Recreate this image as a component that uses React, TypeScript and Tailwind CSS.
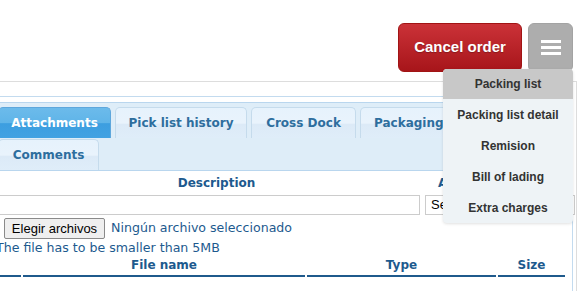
import React from "react";

const dv = { fontFamily: '"DejaVu Sans", Verdana, sans-serif' };
const ar = { fontFamily: '"Liberation Sans", Arial, sans-serif' };

function Tab({ label, active, w }: { label: string; active?: boolean; w?: string }) {
  return (
    <div
      className={
        "h-[31px] shrink-0 whitespace-nowrap flex items-center justify-center rounded-t-[5px] border border-b-0 text-[12px] font-bold " +
        (active
          ? "border-[#5ea7dc] text-white bg-[linear-gradient(#6cbbeb_0%,#5fb4e8_50%,#3c9ee0_52%,#42a2e2_100%)]"
          : "border-[#c5dbec] text-[#2e6e9e] bg-[linear-gradient(#e6f2fc_0%,#e9f3fc_50%,#dceaf7_55%,#dfedf9_100%)]") +
        (w ? " " + w : " px-[13px]")
      }
      style={dv}
    >
      {label}
    </div>
  );
}

export default function App() {
  const items = ["Packing list detail", "Remision", "Bill of lading", "Extra charges"];
  return (
    <div className="relative w-[588px] h-[291px] overflow-hidden bg-white">
      {/* top bar */}
      <div className="h-[81px] flex justify-end items-start pt-[23px] pr-[15px] gap-[6px]">
        <button
          className="w-[124px] h-[49px] rounded-[6px] border border-[#a11414] bg-[linear-gradient(#cb3238,#a7151a)] text-white text-[15px] font-bold [text-shadow:0_1px_1px_rgba(0,0,0,0.25)]"
          style={ar}
        >
          Cancel order
        </button>
        <button className="w-[45px] h-[49px] rounded-[6px] border border-[#a3a3a3] bg-[#adadad] flex flex-col items-center justify-center gap-[3px]">
          <span className="block w-[20px] h-[3px] bg-white" />
          <span className="block w-[20px] h-[3px] bg-white" />
          <span className="block w-[20px] h-[3px] bg-white" />
        </button>
      </div>

      {/* outer box */}
      <div className="ml-[-20px] mr-[11px] border-t border-r border-l border-[#dddddd] pl-[7px] pr-[3px] pt-[14px] h-[220px]">
        {/* widget */}
        <div className="border border-b-0 border-[#c3dbef] pt-[5px] px-[4px] h-[206px]">
          {/* nav */}
          <div className="border border-[#b9d6ee] bg-[#deedf8] pt-[4px] pl-[4px] flex flex-col gap-[1px] overflow-hidden">
            <div className="flex gap-[4px]">
              <Tab label="Attachments" active w="w-[113px]" />
              <Tab label="Pick list history" w="w-[132px]" />
              <Tab label="Cross Dock" w="w-[105px]" />
              <Tab label="Packaging" />
            </div>
            <div className="flex gap-[4px]">
              <Tab label="Comments" w="w-[101px]" />
            </div>
          </div>

          {/* content */}
          <div className="pl-[5px] text-[#1d5a8e]" style={dv}>
            <div className="flex h-[24px] items-center text-[12px] font-bold">
              <div className="w-[427px] shrink-0 pl-[10px] text-center">Description</div>
              <div className="pl-[13px] whitespace-nowrap overflow-hidden">Attachment type</div>
            </div>
            <div className="flex gap-[5px] h-[20px]">
              <div className="w-[422px] shrink-0 h-[20px] border border-[#cccccc] bg-white" />
              <div
                className="w-[150px] shrink-0 h-[20px] border border-[#cccccc] bg-white text-[13px] text-black pl-[5px] leading-[18px]"
                style={ar}
              >
                Select
              </div>
            </div>
            <div className="flex items-center mt-[3px] h-[21px]">
              <button
                className="ml-[6px] shrink-0 w-[101px] h-[21px] border border-[#8a8a8a] rounded-[2px] bg-[#efefef] text-black text-[13px] leading-[19px]"
                style={ar}
              >
                Elegir archivos
              </button>
              <span className="ml-[6px] text-[12.6px] whitespace-nowrap">Ningún archivo seleccionado</span>
            </div>
            <div className="text-[12.6px] leading-[15px] mt-[1px] ml-[-2px] whitespace-nowrap">The file has to be smaller than 5MB</div>
            <div className="flex gap-[2px] mt-[3px] text-[12px] font-bold">
              <div className="w-[23px] shrink-0 h-[19px] border-b-2 border-[#1f5a8c]" />
              <div className="w-[282px] shrink-0 h-[19px] leading-[15px] text-center border-b-2 border-[#1f5a8c]">File name</div>
              <div className="w-[189px] shrink-0 h-[19px] leading-[15px] text-center border-b-2 border-[#1f5a8c]">Type</div>
              <div className="w-[67px] shrink-0 h-[19px] leading-[15px] text-center border-b-2 border-[#1f5a8c]">Size</div>
            </div>
          </div>
        </div>
      </div>

      {/* dropdown */}
      <div
        className="absolute left-[443px] top-[69px] w-[130px] rounded-[4px] overflow-hidden bg-[#eef3f6] shadow-[0_1px_3px_rgba(0,0,0,0.12)] text-[12px] font-bold text-[#333333]"
        style={ar}
      >
        <div className="h-[30px] flex items-center justify-center bg-[#c8c8c8]">Packing list</div>
        {items.map((t) => (
          <div key={t} className="h-[31px] flex items-center justify-center">
            {t}
          </div>
        ))}
      </div>
    </div>
  );
}
